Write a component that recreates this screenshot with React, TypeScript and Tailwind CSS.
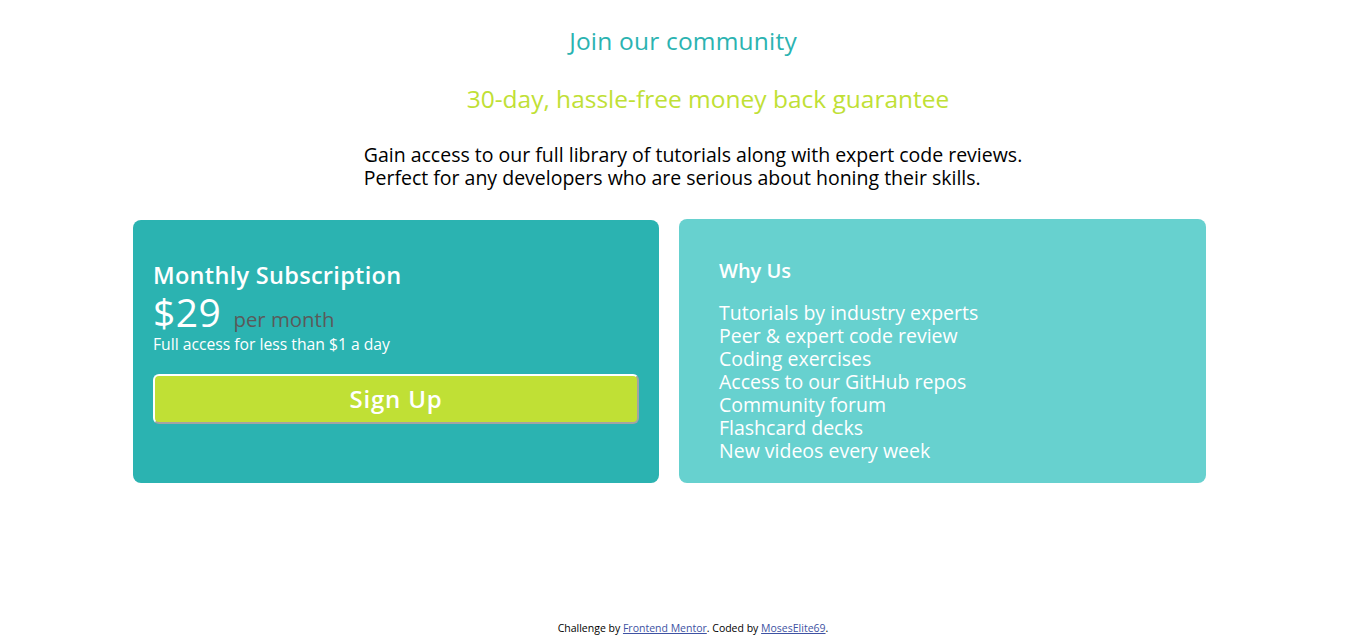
export default function App() {
  const list = [
    "Tutorials by industry experts",
    "Peer & expert code review",
    "Coding exercises",
    "Access to our GitHub repos",
    "Community forum",
    "Flashcard decks",
    "New videos every week",
  ];
  return (
    <div className="bg-white min-h-screen font-['Open_Sans',sans-serif] text-black">
      <h1 className="pt-[27px] text-center text-[24.5px] leading-[28px] font-medium tracking-[0.2px] text-[#2bb3b1]">
        Join our community
      </h1>
      <h2 className="mt-[30px] pl-[50px] text-center text-[24.5px] leading-[28px] font-medium text-[#c0e035]">
        30-day, hassle-free money back guarantee
      </h2>
      <div className="mt-[30px] flex justify-center pl-[20px]">
        <p className="text-[19.5px] leading-[23px]">
          Gain access to our full library of tutorials along with expert code reviews.
          <br />
          Perfect for any developers who are serious about honing their skills.
        </p>
      </div>
      <div className="mt-[31px] flex justify-center gap-5 pr-[27px]">
        <div className="w-[526px] h-[263px] rounded-lg bg-[#2bb3b1] px-5 pt-[41px] text-white">
          <h3 className="text-[23.5px] leading-[28px] font-semibold tracking-[0.3px]">Monthly Subscription</h3>
          <div className="mt-[2px] flex items-baseline gap-[12px]">
            <span className="text-[39px] leading-[42px] tracking-[0.5px]">$29</span>
            <span className="text-[20.4px] leading-[24px] text-[#5a5a5a]">per month</span>
          </div>
          <p className="mt-[1px] text-[15.7px] leading-[20px]">Full access for less than $1 a day</p>
          <button className="mt-[20px] block w-[486px] h-[50px] rounded-[6px] border-2 border-t-white border-l-white border-b-[#a3a3a3] border-r-[#a3a3a3] bg-[#c0e035] text-[24px] font-semibold tracking-[0.8px] text-white">
            Sign Up
          </button>
        </div>
        <div className="w-[527px] h-[264px] -mt-px rounded-lg bg-[#67d1cf] pl-[40px] pt-[40px] text-white">
          <h3 className="text-[20px] leading-[24px] font-semibold">Why Us</h3>
          <ul className="mt-[18px]">
            {list.map((t) => (
              <li key={t} className="text-[19.5px] leading-[23px]">
                {t}
              </li>
            ))}
          </ul>
        </div>
      </div>
      <footer className="mt-[138px] pl-[20px] text-center text-[10.5px] leading-[14px]">
        Challenge by{" "}
        <a href="#" className="text-[#3e52a3] underline">
          Frontend Mentor
        </a>
        . Coded by{" "}
        <a href="#" className="text-[#3e52a3] underline">
          MosesElite69
        </a>
        .
      </footer>
    </div>
  );
}
